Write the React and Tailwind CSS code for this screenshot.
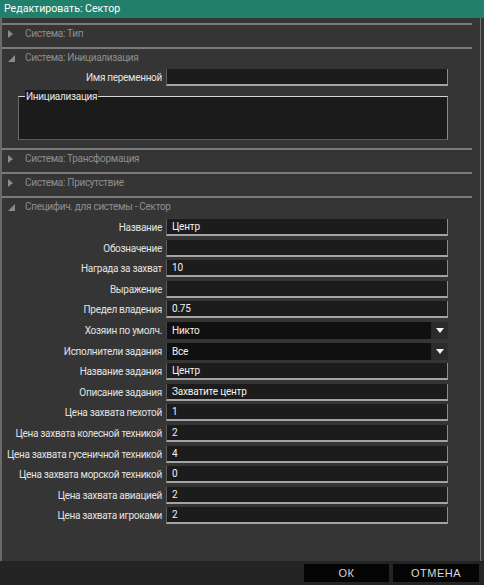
import React from 'react';

const fields = [
  { label: 'Название', value: 'Центр' },
  { label: 'Обозначение', value: '' },
  { label: 'Награда за захват', value: '10' },
  { label: 'Выражение', value: '' },
  { label: 'Предел владения', value: '0.75' },
  { label: 'Хозяин по умолч.', value: 'Никто', select: true },
  { label: 'Исполнители задания', value: 'Все', select: true },
  { label: 'Название задания', value: 'Центр' },
  { label: 'Описание задания', value: 'Захватите центр' },
  { label: 'Цена захвата пехотой', value: '1' },
  { label: 'Цена захвата колесной техникой', value: '2' },
  { label: 'Цена захвата гусеничной техникой', value: '4' },
  { label: 'Цена захвата морской техникой', value: '0' },
  { label: 'Цена захвата авиацией', value: '2' },
  { label: 'Цена захвата игроками', value: '2' },
];

const Arrow = ({ open }) =>
  open ? (
    <svg width="7" height="7" viewBox="0 0 7 7">
      <path d="M7 0L7 7L0 7Z" fill="#8a8a8a" />
    </svg>
  ) : (
    <svg width="5" height="8" viewBox="0 0 5 8">
      <path d="M0 0L5 4L0 8Z" fill="#8a8a8a" />
    </svg>
  );

const SectionHeader = ({ title, open, last }) => (
  <div>
    <div className="h-[2px] w-[470px] bg-[#7a7a7a]" />
    <div className={`${open ? (last ? 'h-[21px]' : 'h-[20px]') : 'h-[22px]'} flex items-start pt-[2px] pl-[6px]`}>
      <span className="w-[17px] h-[14px] flex items-center">
        <Arrow open={open} />
      </span>
      <span className="text-[10px] tracking-[-0.3px] leading-[14px] text-[#8e8e8e]">{title}</span>
    </div>
  </div>
);

const Field = ({ label, value, select }) => (
  <div className="flex items-center h-[17px]">
    <div className="w-[160px] text-right text-[10px] tracking-[-0.3px] leading-[17px] text-[#e2e2e2] whitespace-nowrap">
      {label}
    </div>
    <div className="ml-[4px] w-[282px] h-[17px]">
      {select ? (
        <div className="flex h-full">
          <div className="flex-1 bg-[#101010] border-l border-l-[#444] pl-[5px] text-[10px] tracking-[-0.2px] leading-[17px] text-[#f2f2f2]">
            {value}
          </div>
          <div className="w-[17px] bg-[#2b2b2b] flex items-center justify-center">
            <svg width="8" height="5" viewBox="0 0 8 5">
              <path d="M0 0L8 0L4 5Z" fill="#f2f2f2" />
            </svg>
          </div>
        </div>
      ) : (
        <div className="h-full bg-[#1c1c1c] border-l border-l-[#5c5c5c] border-r border-r-[#8c8c8c] border-b-2 border-b-[#a4a4a4] pl-[5px] text-[10px] tracking-[-0.2px] leading-[15px] text-[#f2f2f2]">
          {value}
        </div>
      )}
    </div>
  </div>
);

export default function App() {
  return (
    <div className="w-[484px] h-[585px] bg-[#353535] flex flex-col font-['Roboto',sans-serif] overflow-hidden">
      <div className="h-[18px] bg-[#21806b] text-white text-[10.6px] leading-[18px] pl-[4px]">
        Редактировать: Сектор
      </div>

      <div className="flex-1 border-l-2 border-l-[#6a6a6a] mr-[3px] border-r border-r-[#707070] pt-[5px]">
        <SectionHeader title="Система: Тип" />

        <SectionHeader title="Система: Инициализация" open />
        <Field label="Имя переменной" value="" />
        <div className="relative ml-[16px] mt-[10px] w-[430px] h-[44px] bg-[#1b1b1b] border-t border-t-[#d8d8d8] border-l border-l-[#6a6a6a] border-r border-r-[#8a8a8a] border-b border-b-[#5a5a5a]">
          <span className="absolute left-[6px] top-[-7px] px-[1px] bg-[#1b1b1b] text-[10px] tracking-[-0.3px] leading-[13px] text-[#e8e8e8]">
            Инициализация
          </span>
        </div>
        <div className="h-[8px]" />

        <SectionHeader title="Система: Трансформация" />
        <SectionHeader title="Система: Присутствие" />

        <SectionHeader title="Специфич. для системы - Сектор" open last />
        <div className="flex flex-col gap-y-[3.6px]">
          {fields.map((f) => (
            <Field key={f.label} {...f} />
          ))}
        </div>
      </div>

      <div className="h-[24px] bg-[#242424] flex justify-end items-start pt-[3px] pr-[5px] gap-[4px]">
        <button className="w-[85px] h-[18px] bg-[#050505] text-[#d6d6d6] text-[11px] leading-[18px] font-['Liberation_Sans',sans-serif] tracking-[0.5px]">
          ОК
        </button>
        <button className="w-[86px] h-[18px] bg-[#050505] text-[#d6d6d6] text-[11px] leading-[18px] font-['Liberation_Sans',sans-serif] tracking-[0.5px]">
          ОТМЕНА
        </button>
      </div>
    </div>
  );
}
